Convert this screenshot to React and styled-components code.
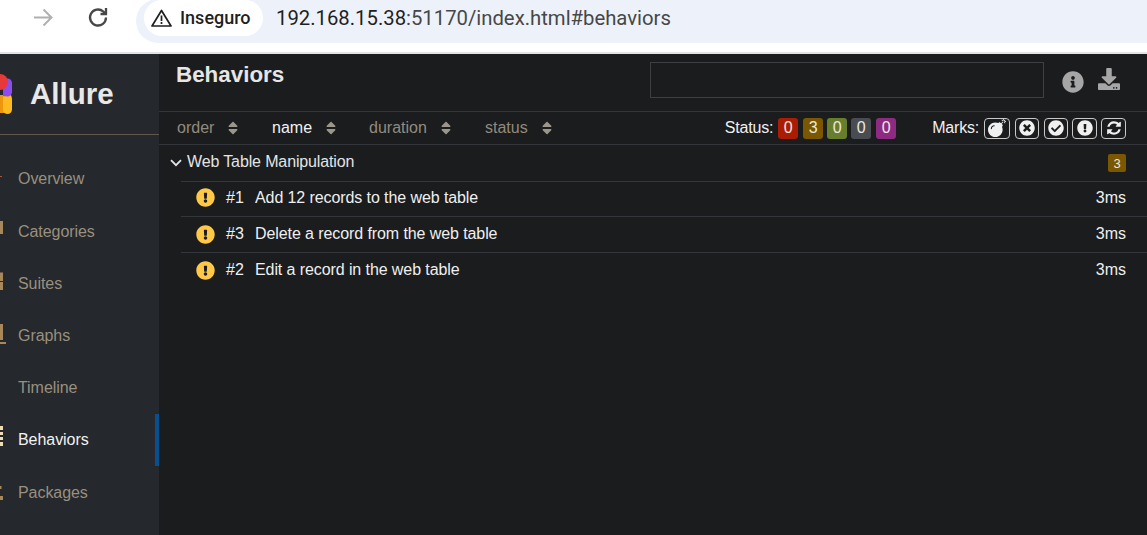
import React from 'react';
import styled, { createGlobalStyle } from 'styled-components';
import { FaBomb, FaTimesCircle, FaCheckCircle, FaExclamationCircle, FaInfoCircle, FaDownload, FaSort } from 'react-icons/fa';

const GlobalStyle = createGlobalStyle`
    html, body {
        margin: 0;
        padding: 0;
        height: 535px;
        overflow: hidden;
        background: #1a1c1e;
        font-family: "Liberation Sans", Arial, sans-serif;
    }
`;

const Page = styled.div`
    width: 1147px;
    height: 535px;
    display: flex;
    flex-direction: column;
    overflow: hidden;
`;

const BrowserBar = styled.div`
    height: 52px;
    flex: none;
    background: #fff;
    border-bottom: 2px solid #e3e3e3;
    display: flex;
    align-items: flex-start;
    padding-left: 31px;
`;

const NavIcon = styled.svg`
    width: 24px;
    height: 24px;
    margin-top: 5px;
    margin-right: ${(p) => p.$gap}px;
    fill: none;
    stroke: ${(p) => p.$color};
    stroke-width: ${(p) => p.$weight};
`;

const Omnibox = styled.div`
    flex: 1;
    height: 44px;
    margin-top: -1px;
    padding: 0 0 7px 8px;
    box-sizing: border-box;
    background: #edf2fa;
    border-radius: 22px 0 0 22px;
    display: flex;
    align-items: center;
`;

const SecurityChip = styled.div`
    height: 36px;
    width: 119px;
    flex: none;
    background: #fff;
    border-radius: 18px;
    display: flex;
    align-items: center;
    gap: 8px;
    padding-left: 7px;
    box-sizing: border-box;
    font-family: Roboto, "Liberation Sans", sans-serif;
    font-size: 18px;
    font-weight: 500;
    color: #1f1f1f;
`;

const Url = styled.span`
    margin-left: 13px;
    font-family: Roboto, "Liberation Sans", sans-serif;
    font-size: 20.3px;
    color: #1f1f1f;
    span {
        color: #474747;
    }
`;

const Body = styled.div`
    flex: 1;
    display: flex;
    min-height: 0;
`;

const Sidebar = styled.aside`
    width: 159px;
    flex: none;
    background: #25282c;
    overflow: hidden;
    display: flex;
    flex-direction: column;
`;

const Brand = styled.div`
    height: 81px;
    flex: none;
    box-sizing: border-box;
    border-bottom: 1px solid #5e574c;
    display: flex;
    align-items: center;
    gap: 17px;
    margin-bottom: 18.3px;
    font-size: 29.5px;
    font-weight: bold;
    color: #e8e8e8;
    svg {
        flex: none;
    }
`;

const MenuItem = styled.div`
    height: 52.2px;
    flex: none;
    box-sizing: border-box;
    display: flex;
    align-items: center;
    gap: 10px;
    font-size: 16px;
    letter-spacing: -0.06px;
    color: ${(p) => (p.$active ? '#f2f2f2' : '#99907f')};
    border-right: 4px solid ${(p) => (p.$active ? '#07508f' : 'transparent')};
    svg {
        flex: none;
    }
`;

const Main = styled.main`
    flex: 1;
    min-width: 0;
    background: #1a1c1e;
`;

const Header = styled.div`
    height: 58px;
    box-sizing: border-box;
    padding: 8px 27px 0 17px;
    display: flex;
    align-items: flex-start;
    border-bottom: 1px solid #33363a;
`;

const Title = styled.h2`
    margin: 0;
    flex: 1;
    font-size: 22.4px;
    line-height: 25px;
    font-weight: bold;
    color: #e6e6e6;
`;

const SearchBox = styled.div`
    width: 394px;
    height: 36px;
    box-sizing: border-box;
    border: 1px solid #3d3f42;
    margin-right: 18px;
`;

const HeaderAction = styled.span`
    display: flex;
    color: #a6a6a6;
    font-size: ${(p) => p.$size}px;
    margin: ${(p) => p.$top}px 0 0 ${(p) => p.$left}px;
`;

const Toolbar = styled.div`
    height: 33px;
    box-sizing: border-box;
    display: flex;
    align-items: center;
    padding: 0 21px 0 18px;
    border-bottom: 1px solid #33363a;
    font-size: 16px;
    color: #f0f0f0;
`;

const SortLabel = styled.div`
    display: flex;
    align-items: center;
    gap: 11px;
    width: ${(p) => p.$width}px;
    color: ${(p) => (p.$active ? '#f2f2f2' : '#928b7d')};
    svg {
        color: #9c9689;
        font-size: 16px;
    }
`;

const Spacer = styled.div`
    flex: 1;
`;

const FilterLabel = styled.span`
    margin-left: ${(p) => p.$left || 0}px;
    margin-right: 5px;
    letter-spacing: -0.2px;
`;

const StatusBadge = styled.span`
    width: 20px;
    height: 21px;
    margin-right: ${(p) => p.$gap}px;
    border-radius: 3px;
    background: ${(p) => p.$color};
    display: flex;
    align-items: center;
    justify-content: center;
    color: #ece8df;
`;

const MarkButton = styled.span`
    width: ${(p) => p.$width}px;
    height: 21px;
    margin-left: ${(p) => p.$left}px;
    box-sizing: border-box;
    border: 1px solid #c9c9c9;
    border-radius: 4px;
    display: flex;
    align-items: center;
    justify-content: center;
    color: #f0f0f0;
    font-size: ${(p) => p.$size || 16}px;
`;

const GroupRow = styled.div`
    height: 36px;
    box-sizing: border-box;
    display: flex;
    align-items: center;
    padding: 0 21px 3px 11px;
    font-size: 16px;
    letter-spacing: -0.13px;
    color: #e4e4e4;
`;

const Chevron = styled.svg`
    width: 12px;
    height: 8px;
    margin: 2px 5px 0 0;
    fill: none;
    stroke: #e4e4e4;
    stroke-width: 1.8;
`;

const GroupName = styled.span`
    flex: 1;
`;

const CountBadge = styled.span`
    width: 18px;
    height: 18px;
    margin-top: 3px;
    border-radius: 2px;
    background: #7a5700;
    font-size: 13px;
    letter-spacing: 0;
    display: flex;
    align-items: center;
    justify-content: center;
    color: #ece8df;
`;

const TestRow = styled.div`
    height: 36px;
    margin-left: 22px;
    box-sizing: border-box;
    border-top: 1px solid #33363a;
    padding: 0 21px 1px 15px;
    display: flex;
    align-items: center;
    font-size: 16px;
    color: #efefef;
    ${GroupRow} + & {
        height: 35px;
        padding-bottom: 3px;
    }
    svg {
        color: #ffc847;
        font-size: 19px;
        margin-right: 11px;
        flex: none;
    }
`;

const TestOrder = styled.span`
    width: 29px;
`;

const TestName = styled.span`
    flex: 1;
    letter-spacing: -0.09px;
`;

const LogoMark = () => (
    <svg width="13" height="44" viewBox="0 0 13 44">
        <rect x="0" y="23" width="6" height="18" fill="#f0950f" />
        <rect x="3" y="22" width="9" height="20" rx="4.5" fill="#fdbb1f" />
        <path d="M3 24 V11 A4.5 4.5 0 0 1 12 11 V20 A4.5 4.5 0 0 1 7.5 24.5 Z" fill="#8b4df0" />
        <circle cx="0" cy="10" r="8" fill="#e8393a" />
    </svg>
);

// the menu icons are cut off by the left edge of the window, only these bits show
const menu = [
    { name: 'Overview', color: '#a5563f', bits: [[0, 13, 2, 1]] },
    { name: 'Categories', color: '#a8875a', bits: [[0, 5, 3, 13]] },
    { name: 'Suites', color: '#a8875a', bits: [[0, 4.5, 3, 8.5], [0, 14, 3, 8]] },
    { name: 'Graphs', color: '#a8875a', bits: [[0, 4, 3, 16], [0, 22, 6, 2]] },
    { name: 'Timeline', color: '#a8875a', bits: [] },
    { name: 'Behaviors', color: '#f0dcb4', bits: [[0, 2, 3, 4], [0, 8, 3, 3], [0, 13, 3, 3], [0, 18, 3, 4]] },
    { name: 'Packages', color: '#a8875a', bits: [[0, 9, 1.5, 3], [0, 19, 3, 4]] },
];

const sorters = [
    { label: 'order', width: 95 },
    { label: 'name', width: 97, active: true },
    { label: 'duration', width: 116 },
    { label: 'status', width: 80 },
];

const statuses = [
    { value: 0, color: '#ab1c05', gap: 5 },
    { value: 3, color: '#7a5700', gap: 4 },
    { value: 0, color: '#677f2d', gap: 4 },
    { value: 0, color: '#494d52', gap: 5 },
    { value: 0, color: '#8f2a82', gap: 0 },
];

const tests = [
    { order: '#1', name: 'Add 12 records to the web table' },
    { order: '#3', name: 'Delete a record from the web table' },
    { order: '#2', name: 'Edit a record in the web table' },
];

function App() {
    return (
        <Page>
            <GlobalStyle />
            <BrowserBar>
                <NavIcon $color="#b0b0b0" $gap={31} $weight={2} viewBox="0 0 24 24">
                    <path d="M3 12.5 H20.5 M12.5 4.5 L20.5 12.5 L12.5 20.5" />
                </NavIcon>
                <NavIcon $color="#474747" $gap={26} $weight={2.3} viewBox="0 0 24 24">
                    <path d="M20 12.5 A8 8 0 1 1 17.3 6.5 L20 9 M20 3 V9 H14.5" />
                </NavIcon>
                <Omnibox>
                    <SecurityChip>
                        <svg width="21" height="18" viewBox="0 0 21 18" fill="none" stroke="#1f1f1f" strokeWidth="1.7">
                            <path d="M10.5 1.5 L20 17 H1 Z" strokeLinejoin="round" />
                            <path d="M10.5 6.5 V12 M10.5 13 V15" />
                        </svg>
                        Inseguro
                    </SecurityChip>
                    <Url>192.168.15.38<span>:51170/index.html#behaviors</span></Url>
                </Omnibox>
            </BrowserBar>
            <Body>
                <Sidebar>
                    <Brand>
                        <LogoMark />
                        Allure
                    </Brand>
                    {menu.map((item) => (
                        <MenuItem key={item.name} $active={item.name === 'Behaviors'}>
                            <svg width="8" height="32" viewBox="0 0 8 32" fill={item.color}>
                                {item.bits.map(([x, y, w, h]) => (
                                    <rect key={y} x={x} y={y} width={w} height={h} />
                                ))}
                            </svg>
                            {item.name}
                        </MenuItem>
                    ))}
                </Sidebar>
                <Main>
                    <Header>
                        <Title>Behaviors</Title>
                        <SearchBox />
                        <HeaderAction $size={22} $left={0} $top={9}><FaInfoCircle /></HeaderAction>
                        <HeaderAction $size={22} $left={14} $top={6}><FaDownload /></HeaderAction>
                    </Header>
                    <Toolbar>
                        {sorters.map((s) => (
                            <SortLabel key={s.label} $width={s.width} $active={s.active}>
                                {s.label}
                                <FaSort />
                            </SortLabel>
                        ))}
                        <Spacer />
                        <FilterLabel>Status:</FilterLabel>
                        {statuses.map((s, i) => (
                            <StatusBadge key={i} $color={s.color} $gap={s.gap}>{s.value}</StatusBadge>
                        ))}
                        <FilterLabel $left={36}>Marks:</FilterLabel>
                        <MarkButton $width={26} $left={0} $size={18}><FaBomb /></MarkButton>
                        <MarkButton $width={24} $left={5}><FaTimesCircle /></MarkButton>
                        <MarkButton $width={24} $left={5}><FaCheckCircle /></MarkButton>
                        <MarkButton $width={25} $left={4}><FaExclamationCircle /></MarkButton>
                        <MarkButton $width={25} $left={4}>
                            <svg width="16" height="16" viewBox="0 0 1792 1792" fill="currentColor">
                                <path d="M1639 1056q0 5-1 7-64 268-268 434.5t-478 166.5q-146 0-282.5-55t-243.5-157l-129 129q-19 19-45 19t-45-19-19-45v-448q0-26 19-45t45-19h448q26 0 45 19t19 45-19 45l-137 137q71 66 161 102t187 36q134 0 250-65t186-179q11-17 53-117 8-23 30-23h192q13 0 22.5 9.5t9.5 22.5zm25-800v448q0 26-19 45t-45 19h-448q-26 0-45-19t-19-45 19-45l138-138q-148-137-349-137-134 0-250 65t-186 179q-11 17-53 117-8 23-30 23h-199q-13 0-22.5-9.5t-9.5-22.5v-7q65-268 270-434.5t480-166.5q146 0 284 55.5t245 156.5l130-129q19-19 45-19t45 19 19 45z" />
                            </svg>
                        </MarkButton>
                    </Toolbar>
                    <GroupRow>
                        <Chevron viewBox="0 0 12 8"><path d="M1 1.2 L6 6.2 L11 1.2" /></Chevron>
                        <GroupName>Web Table Manipulation</GroupName>
                        <CountBadge>3</CountBadge>
                    </GroupRow>
                    {tests.map((t) => (
                        <TestRow key={t.order}>
                            <FaExclamationCircle />
                            <TestOrder>{t.order}</TestOrder>
                            <TestName>{t.name}</TestName>
                            3ms
                        </TestRow>
                    ))}
                </Main>
            </Body>
        </Page>
    );
}

export default App;
